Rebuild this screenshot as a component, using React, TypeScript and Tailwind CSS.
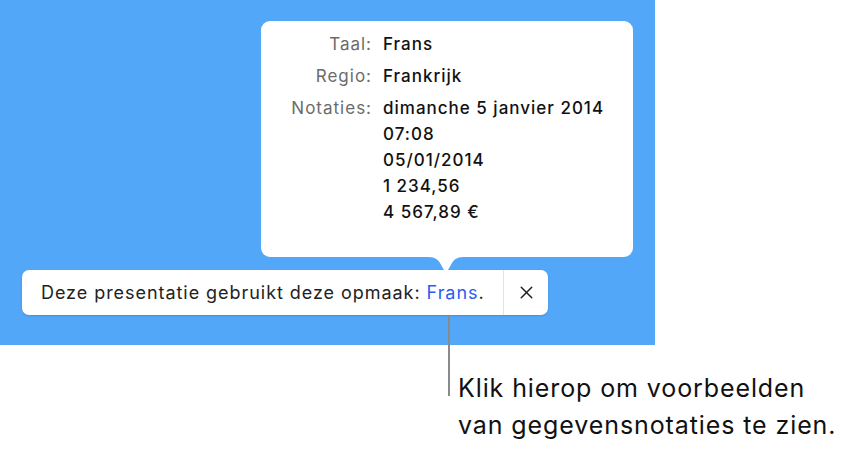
import { X } from "lucide-react";

const rows: { label: string; values: string[] }[] = [
  { label: "Taal:", values: ["Frans"] },
  { label: "Regio:", values: ["Frankrijk"] },
  {
    label: "Notaties:",
    values: ["dimanche 5 janvier 2014", "07:08", "05/01/2014", "1 234,56", "4 567,89 €"],
  },
];

export default function App() {
  return (
    <div className="relative h-[449px] w-[862px] bg-white font-['Inter',sans-serif] text-[#1a1a1a]">
      {/* blue canvas */}
      <div className="flex h-[345px] w-[655px] flex-col bg-[#53a7f8] pt-[21px]">
        {/* popover */}
        <div className="ml-[261px] h-[236px] w-[372px] rounded-[9px] bg-white pt-[10px]">
          <div className="grid grid-cols-[111px_1fr] gap-x-[11px] gap-y-[6px] text-[17px] leading-[26px]">
            {rows.map((r) => (
              <div key={r.label} className="contents">
                <div className="text-right tracking-[1px] text-[#6b6b6b]">{r.label}</div>
                <div className="flex flex-col font-medium tracking-[1px] text-[#111]">
                  {r.values.map((v) => (
                    <span key={v}>{v}</span>
                  ))}
                </div>
              </div>
            ))}
          </div>
        </div>
        {/* arrow */}
        <svg className="ml-[426px] block" width="40" height="13" viewBox="0 0 40 13">
          <path d="M0 0 C8 0 11 1 14 6 L18 13 L22 13 L26 6 C29 1 32 0 40 0 Z" fill="#fff" />
        </svg>
        {/* banner */}
        <div className="ml-[22px] flex h-[45px] w-[526px] items-center rounded-[7px] bg-white shadow-[0_1px_2px_rgba(0,0,0,0.15)]">
          <div className="flex-1 whitespace-nowrap pl-[19px] text-[18px] tracking-[0.95px] text-[#222]">
            Deze presentatie gebruikt deze opmaak: <span className="text-[#2a5cf5]">Frans</span>.
          </div>
          <div className="h-full w-px bg-[#e3e3e3]" />
          <div className="flex w-[44px] items-center justify-center">
            <X size={21} strokeWidth={1.7} className="text-[#222]" />
          </div>
        </div>
      </div>

      {/* callout line */}
      <div className="absolute left-[448px] top-[316px] h-[80px] w-[2px] bg-[#8a8a8a]" />

      {/* caption */}
      <div className="ml-[458px] mt-[25px] text-[25px] leading-[37px] tracking-[0.9px] text-[#111]">
        <div>Klik hierop om voorbeelden</div>
        <div>van gegevensnotaties te zien.</div>
      </div>
    </div>
  );
}
